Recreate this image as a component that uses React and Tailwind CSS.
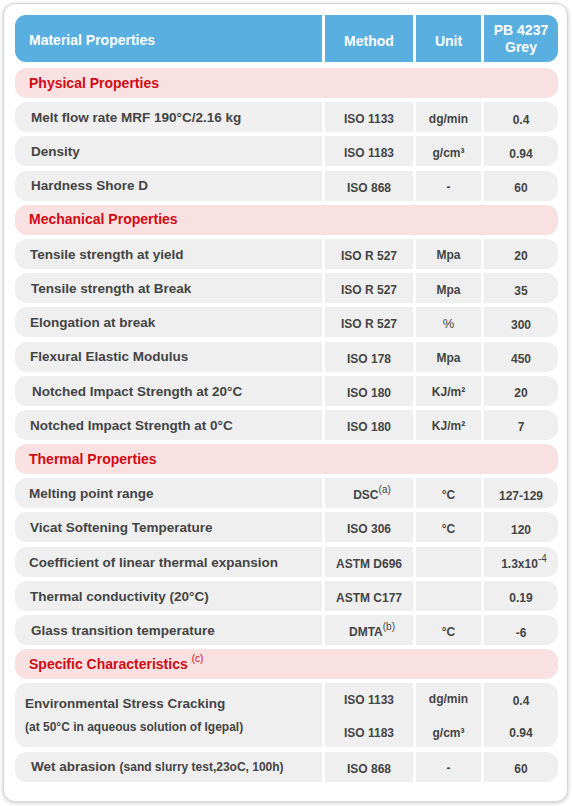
import React from "react";

const font = { fontFamily: '"Liberation Sans", Arial, sans-serif' };

const Sup = ({ children }) => (
  <sup className="text-[10px] font-normal relative -top-[1px] align-super leading-none">{children}</sup>
);

const rows = [
  { type: "section", label: "Physical Properties" },
  { name: "Melt flow rate MRF 190°C/2.16 kg", method: "ISO 1133", unit: "dg/min", value: "0.4", pl: "pl-[16px]" },
  { name: "Density", method: "ISO 1183", unit: "g/cm³", value: "0.94", pl: "pl-[16px]" },
  { name: "Hardness Shore D", method: "ISO 868", unit: "-", value: "60", pl: "pl-[16px]" },
  { type: "section", label: "Mechanical Properties" },
  { name: "Tensile strength at yield", method: "ISO R 527", unit: "Mpa", value: "20", pl: "pl-[15px]" },
  { name: "Tensile strength at Break", method: "ISO R 527", unit: "Mpa", value: "35", pl: "pl-[16px]" },
  { name: "Elongation at break", method: "ISO R 527", unit: "%", value: "300", pl: "pl-[15px]", unitLight: true },
  { name: "Flexural Elastic Modulus", method: "ISO 178", unit: "Mpa", value: "450", pl: "pl-[15px]" },
  { name: "Notched Impact Strength at 20°C", method: "ISO 180", unit: "KJ/m²", value: "20", pl: "pl-[17px]" },
  { name: "Notched Impact Strength at 0°C", method: "ISO 180", unit: "KJ/m²", value: "7", pl: "pl-[15px]" },
  { type: "section", label: "Thermal Properties" },
  { name: "Melting point range", method: <span className="pl-[6px]">DSC<Sup>(a)</Sup></span>, unit: "°C", value: "127-129", pl: "pl-[14px]" },
  { name: "Vicat Softening Temperature", method: "ISO 306", unit: "°C", value: "120", pl: "pl-[15px]" },
  { name: "Coefficient of linear thermal expansion", method: "ASTM D696", unit: "", value: <span className="pl-[6px]">1.3x10<Sup>-4</Sup></span>, pl: "pl-[14px]" },
  { name: "Thermal conductivity (20°C)", method: "ASTM C177", unit: "", value: "0.19", pl: "pl-[15px]" },
  { name: "Glass transition temperature", method: <span className="pl-[6px]">DMTA<Sup>(b)</Sup></span>, unit: "°C", value: "-6", pl: "pl-[16px]" },
  { type: "section", label: <span>Specific Characteristics <Sup>(c)</Sup></span> },
];

function Cells({ children, h = "h-[30px]" }) {
  return (
    <div className={`grid grid-cols-[307px_88px_65px_74px] gap-x-[3px] ${h}`}>{children}</div>
  );
}

function DataRow({ r }) {
  return (
    <Cells>
      <div className={`bg-[#efefef] rounded-l-[12px] flex items-center ${r.pl} pt-[2px] text-[13.5px] font-bold text-[#444]`}>
        <span>{r.name}</span>
      </div>
      <div className="bg-[#efefef] flex items-center justify-center pt-[4px] text-[12px] font-bold text-[#444]">
        {r.method}
      </div>
      <div className={`bg-[#efefef] flex items-center justify-center pt-[3px] text-[12px] ${r.unitLight ? "font-normal text-[13px]" : "font-bold"} text-[#444]`}>
        {r.unit}
      </div>
      <div className="bg-[#efefef] rounded-r-[12px] flex items-center justify-center pt-[5px] text-[12px] font-bold text-[#444]">
        {r.value}
      </div>
    </Cells>
  );
}

function SectionRow({ label }) {
  return (
    <div className="h-[30px] bg-[#f9e1e2] rounded-[12px] flex items-center pl-[14px] text-[14px] font-bold text-[#d10a14]">
      {label}
    </div>
  );
}

export default function App() {
  return (
    <div className="w-[572px] h-[806px] bg-white pt-[3px] pl-[3px]" style={font}>
      <div className="w-[565px] h-[799px] bg-white border border-[#d6d6d6] rounded-[12px] shadow-[0_1px_4px_rgba(0,0,0,0.22)] pt-[11px] pl-[11px]">
        <div className="w-[543px]">
          <div className="grid grid-cols-[307px_88px_65px_74px] gap-x-[3px] h-[47px] text-white font-bold text-[14px]">
            <div className="bg-[#5aafe1] rounded-l-[11px] flex items-center pl-[14px] pt-[3px]">Material Properties</div>
            <div className="bg-[#5aafe1] flex items-center justify-center pt-[5px]">Method</div>
            <div className="bg-[#5aafe1] flex items-center justify-center pt-[5px]">Unit</div>
            <div className="bg-[#5aafe1] rounded-r-[11px] flex flex-col items-center justify-center leading-[17px] pt-[1px]">
              <span>PB 4237</span>
              <span>Grey</span>
            </div>
          </div>
          <div className="mt-[6px] flex flex-col gap-[4.2px]">
            {rows.map((r, i) =>
              r.type === "section" ? <SectionRow key={i} label={r.label} /> : <DataRow key={i} r={r} />
            )}
            <Cells h="h-[64px]">
              <div className="bg-[#efefef] rounded-l-[12px] flex flex-col justify-center pl-[10px] text-[#444] font-bold">
                <span className="text-[13.5px] leading-[20px]">Environmental Stress Cracking</span>
                <span className="text-[12px] leading-[16px] mt-[5px] mb-[2px]">(at 50°C in aqueous solution of Igepal)</span>
              </div>
              <div className="bg-[#efefef] flex flex-col items-center justify-between pt-[8px] pb-[5px] text-[12px] font-bold text-[#444]">
                <span>ISO 1133</span>
                <span>ISO 1183</span>
              </div>
              <div className="bg-[#efefef] flex flex-col items-center justify-between pt-[7px] pb-[5px] text-[12px] font-bold text-[#444]">
                <span>dg/min</span>
                <span>g/cm³</span>
              </div>
              <div className="bg-[#efefef] rounded-r-[12px] flex flex-col items-center justify-between pt-[9px] pb-[5px] text-[12px] font-bold text-[#444]">
                <span>0.4</span>
                <span>0.94</span>
              </div>
            </Cells>
            <DataRow
              r={{
                name: (
                  <>
                    Wet abrasion<span className="text-[12px] ml-[4px]">(sand slurry test,23oC, 100h)</span>
                  </>
                ),
                method: "ISO 868",
                unit: "-",
                value: "60",
                pl: "pl-[16px]",
              }}
            />
          </div>
        </div>
      </div>
    </div>
  );
}
